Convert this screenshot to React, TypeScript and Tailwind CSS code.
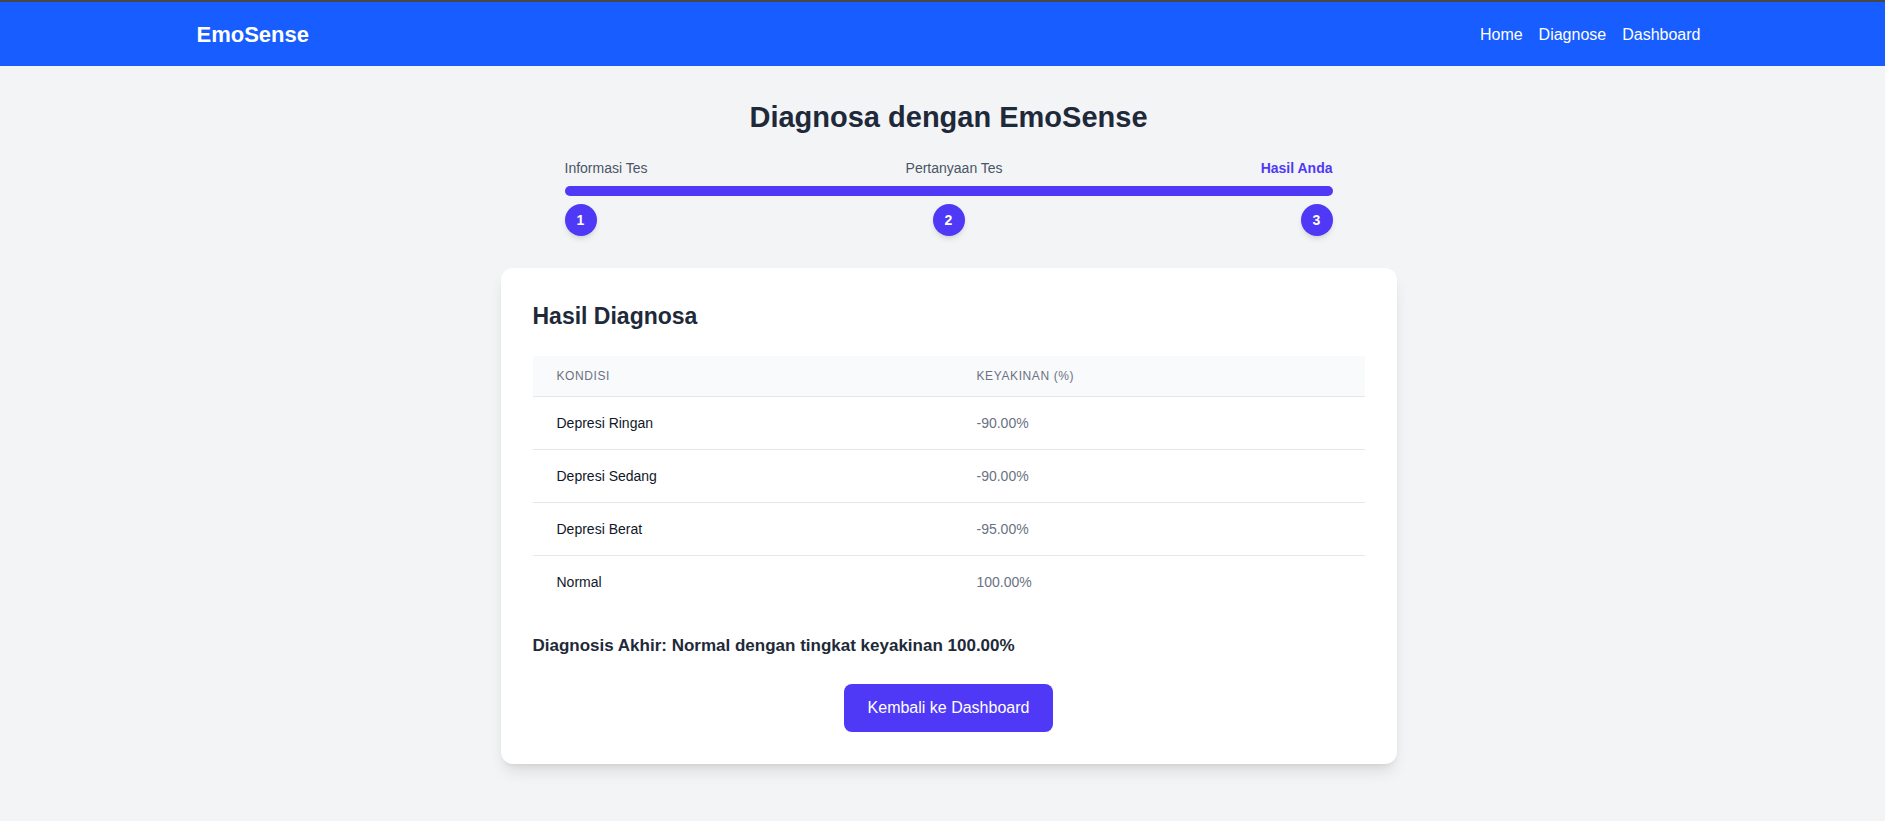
import React from 'react';

const results = [
  { kondisi: 'Depresi Ringan', keyakinan: '-90.00%' },
  { kondisi: 'Depresi Sedang', keyakinan: '-90.00%' },
  { kondisi: 'Depresi Berat', keyakinan: '-95.00%' },
  { kondisi: 'Normal', keyakinan: '100.00%' },
];

const steps = ['Informasi Tes', 'Pertanyaan Tes', 'Hasil Anda'];

const Navbar: React.FC = () => (
  <nav className="bg-[#175dff] border-t-2 border-[#474747] pl-3">
    <div className="max-w-[1536px] mx-auto px-4 h-16 flex items-center justify-between">
      <span className="text-[22px] font-bold text-white">EmoSense</span>
      <div className="flex items-center gap-4 pt-0.5 text-base text-white">
        <a href="#">Home</a>
        <a href="#">Diagnose</a>
        <a href="#">Dashboard</a>
      </div>
    </div>
  </nav>
);

const Stepper: React.FC = () => (
  <div className="w-full max-w-3xl mx-auto mb-8">
    <div className="flex justify-between text-sm text-gray-600 mb-2">
      {steps.map((s, i) => (
        <span key={s} className={i === 2 ? 'text-indigo-600 font-semibold' : ''}>
          {s}
        </span>
      ))}
    </div>
    <div className="h-2.5 w-full rounded-full bg-indigo-600" />
    <div className="flex justify-between mt-2">
      {[1, 2, 3].map((n) => (
        <div
          key={n}
          className="w-8 h-8 rounded-full bg-indigo-600 text-white text-sm font-bold flex items-center justify-center shadow-md"
        >
          {n}
        </div>
      ))}
    </div>
  </div>
);

export default function App() {
  return (
    <div
      className="min-h-screen bg-gray-100"
      style={{ fontFamily: '"Liberation Sans", Arial, sans-serif' }}
    >
      <Navbar />

      <main className="pl-3 pt-[33px] pb-8">
        <h1 className="text-[29px] leading-9 font-bold text-gray-800 text-center mb-[23px]">
          Diagnosa dengan EmoSense
        </h1>

        <Stepper />

        <div className="max-w-4xl mx-auto bg-white rounded-xl shadow-lg p-8">
          <h2 className="text-[23px] leading-8 font-bold text-gray-800 mb-6">Hasil Diagnosa</h2>

          <table className="w-full">
            <thead className="bg-gray-50 border-b border-gray-200">
              <tr>
                <th className="w-[420px] px-6 py-3 text-left text-xs font-medium text-gray-500 uppercase tracking-wider">
                  Kondisi
                </th>
                <th className="px-6 py-3 text-left text-xs font-medium text-gray-500 uppercase tracking-wider">
                  Keyakinan (%)
                </th>
              </tr>
            </thead>
            <tbody className="divide-y divide-gray-200">
              {results.map((r) => (
                <tr key={r.kondisi}>
                  <td className="px-6 py-4 text-sm text-gray-900">{r.kondisi}</td>
                  <td className="px-6 py-4 text-sm text-gray-500">{r.keyakinan}</td>
                </tr>
              ))}
            </tbody>
          </table>

          <p className="mt-6 text-[17px] leading-7 font-semibold text-gray-800">
            Diagnosis Akhir: Normal dengan tingkat keyakinan 100.00%
          </p>

          <div className="mt-6 flex justify-center">
            <button className="bg-indigo-600 text-white px-6 py-3 rounded-lg">Kembali ke Dashboard</button>
          </div>
        </div>
      </main>
    </div>
  );
}
